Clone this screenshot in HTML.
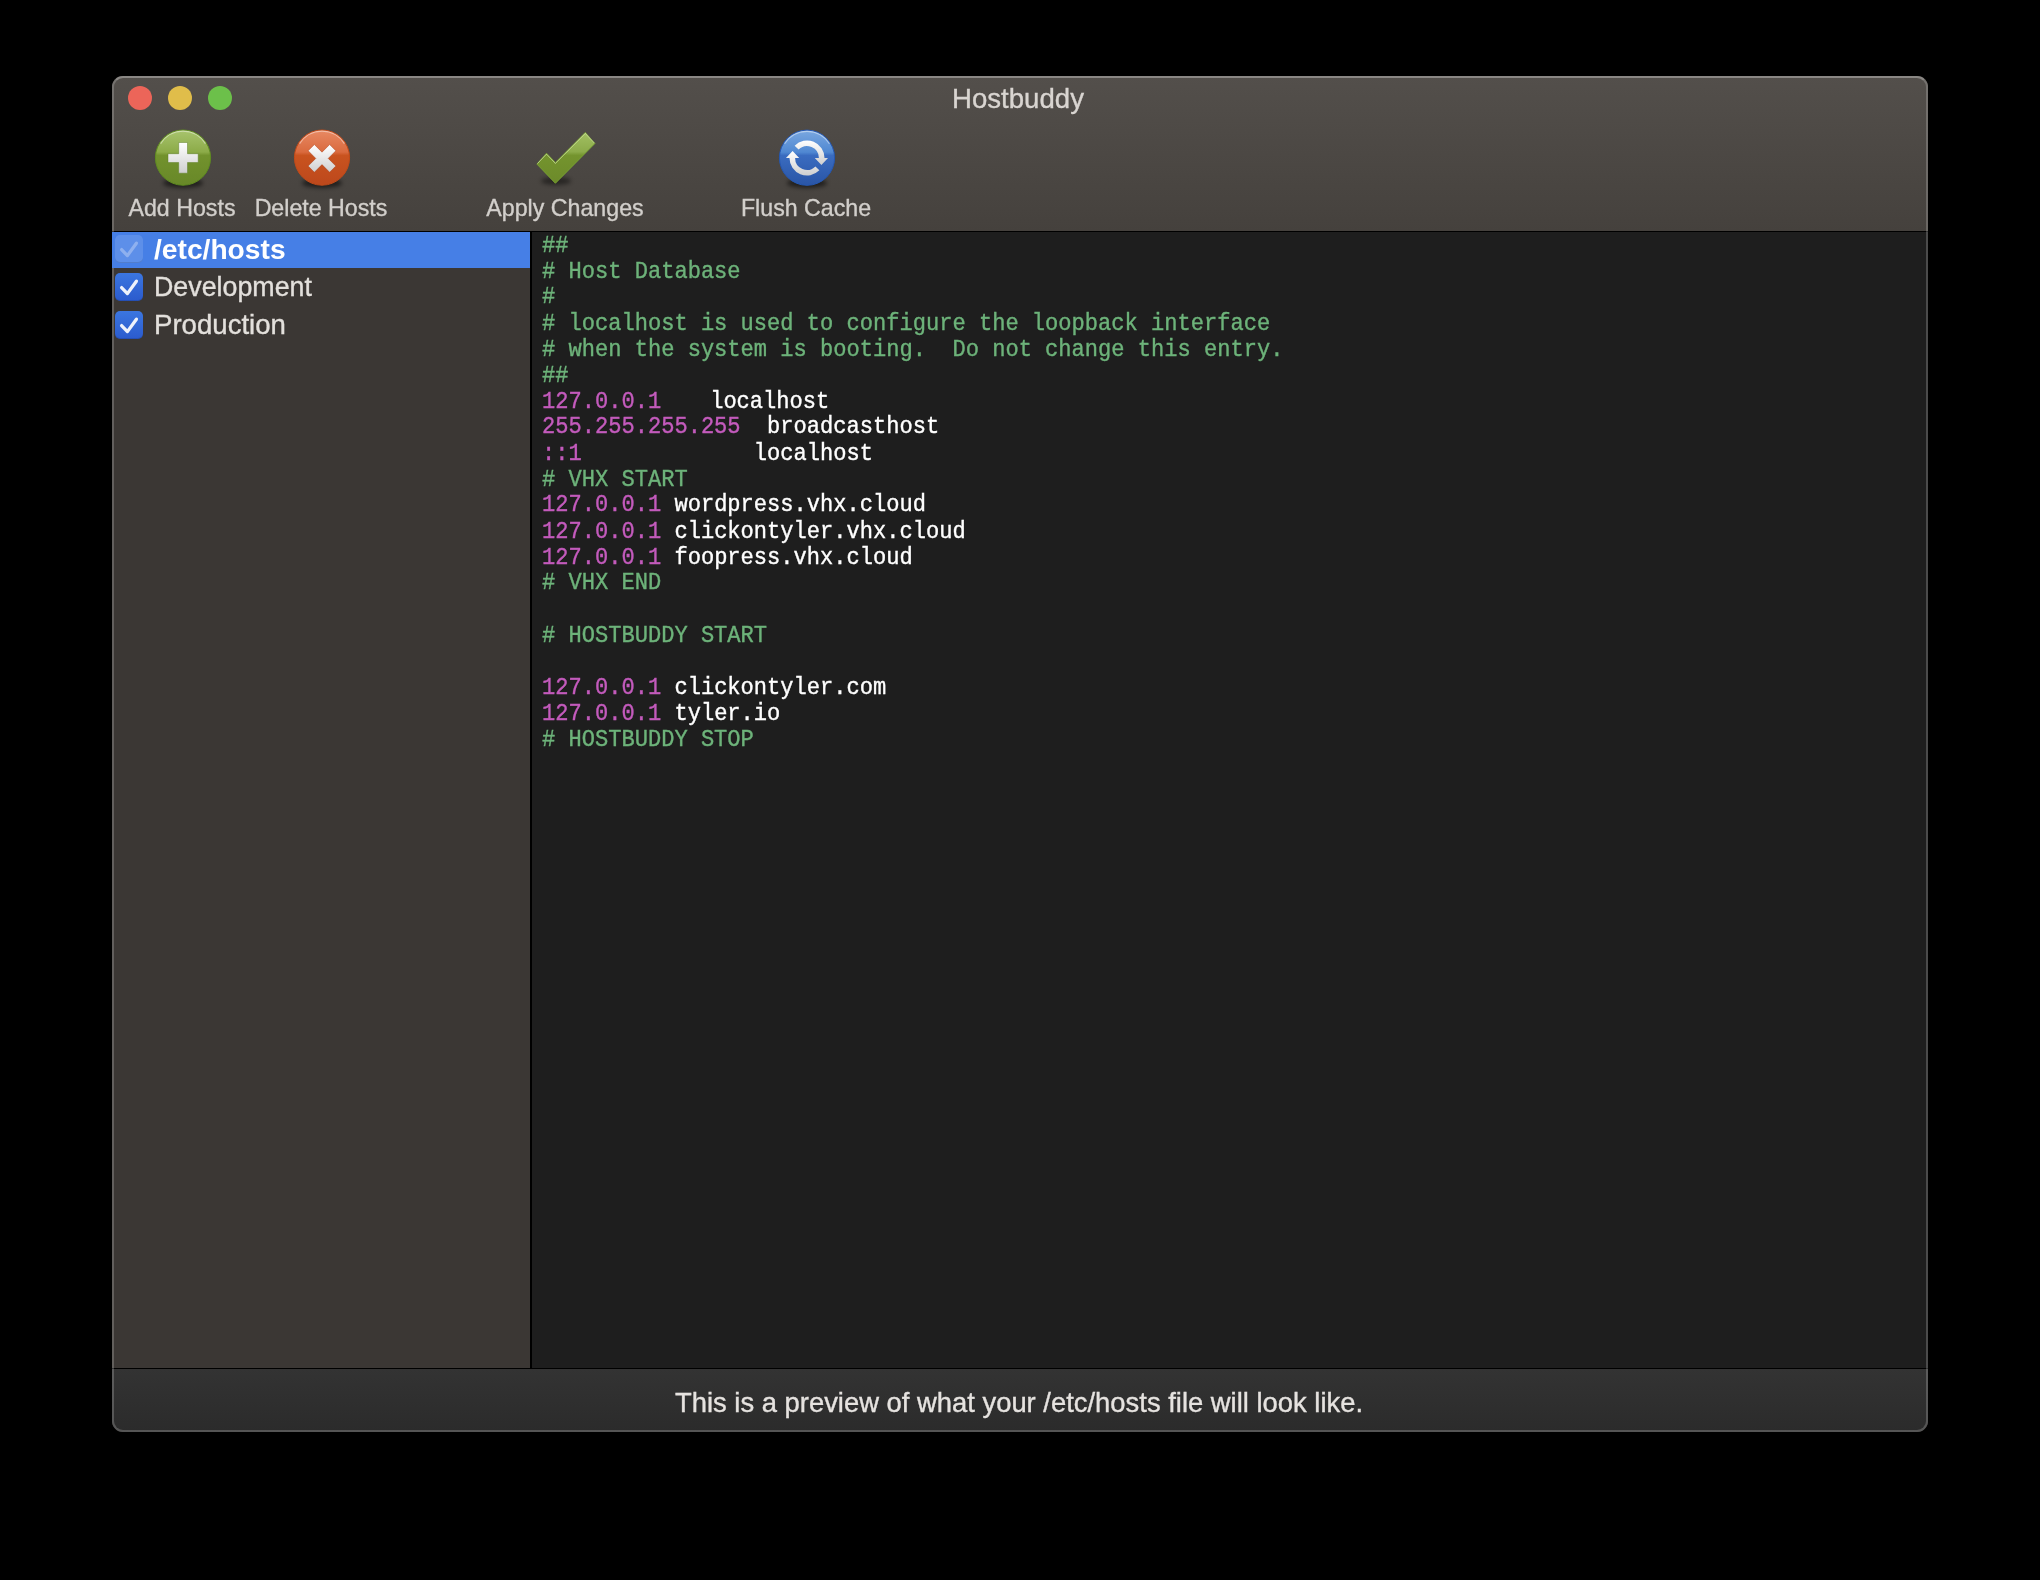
<!DOCTYPE html>
<html><head><meta charset="utf-8">
<style>
html,body{margin:0;padding:0;background:#000;width:2040px;height:1580px;overflow:hidden;}
body{position:relative;font-family:"Liberation Sans",sans-serif;}
.title,.lbl,.rtext,#stext{will-change:transform;-webkit-text-stroke:0.35px currentColor;}
.abs{position:absolute;}
#win{position:absolute;left:112px;top:76px;width:1816px;height:1356px;border-radius:11px;overflow:hidden;background:#3b3734;}
#toolbar{position:absolute;left:0;top:0;width:1816px;height:155px;background:linear-gradient(#534f4b,#45413d);}
#tbline{position:absolute;left:0;top:155px;width:1816px;height:1px;background:#000;}
#sidebar{position:absolute;left:0;top:156px;width:418px;height:1136px;background:#3b3734;}
#divider{position:absolute;left:418px;top:156px;width:2px;height:1136px;background:#000;}
#editor{position:absolute;left:420px;top:156px;width:1396px;height:1136px;background:#1e1e1e;}
#sbline{position:absolute;left:0;top:1292px;width:1816px;height:1px;background:#000;}
#status{position:absolute;left:0;top:1293px;width:1816px;height:63px;background:linear-gradient(#333,#2b2b2b);}
#frame{position:absolute;left:112px;top:76px;width:1816px;height:1356px;border-radius:11px;box-sizing:border-box;border:2px solid rgba(255,255,255,0.2);border-top-color:rgba(255,255,255,0.32);}
.light{position:absolute;width:24px;height:24px;border-radius:50%;top:86px;}
.title{position:absolute;left:-2px;width:2040px;text-align:center;top:82px;font-size:27.6px;color:#d9d5d1;line-height:34px;}
.lbl{position:absolute;font-size:23.2px;color:#d2cfcb;line-height:28px;white-space:nowrap;transform:translateX(-50%);top:194px;}
.row{position:absolute;left:112px;width:418px;height:36px;}
.cb{position:absolute;left:115px;width:28px;height:28px;border-radius:5px;background:linear-gradient(#3b76e0,#2b5bcd);box-shadow:inset 0 -1px 0 rgba(0,0,0,0.12);}
.rtext{position:absolute;left:154px;font-size:26.8px;color:#e3e0dc;line-height:34px;white-space:nowrap;}
pre{margin:0;position:absolute;left:542px;top:232.5px;font-family:"Liberation Mono",monospace;font-size:22.07px;line-height:23.636px;color:#ffffff;transform:scaleY(1.1);transform-origin:0 0;-webkit-text-stroke:0.35px currentColor;}
.c{color:#6db37a;}
.ip{color:#c45bbd;}
#stext{position:absolute;left:-1.5px;width:2040px;text-align:center;top:1386px;font-size:27.4px;color:#e6e3e0;line-height:34px;}
</style></head><body>
<div id="win">
  <div id="toolbar"></div>
  <div id="tbline"></div>
  <div id="sidebar"></div>
  <div id="divider"></div>
  <div id="editor"></div>
  <div id="sbline"></div>
  <div id="status"></div>
</div>
<div id="frame"></div>

<div class="light" style="left:128px;background:#ec6559;"></div>
<div class="light" style="left:168px;background:#e0bd4a;"></div>
<div class="light" style="left:208px;background:#6cc04a;"></div>
<div class="title">Hostbuddy</div>

<!-- toolbar icons -->
<svg class="abs" style="left:0;top:0;" width="1000" height="240" viewBox="0 0 1000 240">
<defs>
 <filter id="blur" x="-50%" y="-50%" width="200%" height="200%"><feGaussianBlur stdDeviation="2.2"/></filter>
 <linearGradient id="gG" x1="0" y1="0" x2="0" y2="1">
  <stop offset="0" stop-color="#a8c46e"/><stop offset="0.40" stop-color="#8cab48"/><stop offset="0.46" stop-color="#72922d"/><stop offset="1" stop-color="#688828"/>
 </linearGradient>
 <linearGradient id="gR" x1="0" y1="0" x2="0" y2="1">
  <stop offset="0" stop-color="#e88a64"/><stop offset="0.40" stop-color="#da6a3e"/><stop offset="0.46" stop-color="#c9531f"/><stop offset="1" stop-color="#bd481c"/>
 </linearGradient>
 <linearGradient id="gB" x1="0" y1="0" x2="0" y2="1">
  <stop offset="0" stop-color="#7aa8e0"/><stop offset="0.40" stop-color="#5088d2"/><stop offset="0.46" stop-color="#3a6cc0"/><stop offset="1" stop-color="#2a55a6"/>
 </linearGradient>
 <linearGradient id="gW" x1="0" y1="0" x2="0" y2="1">
  <stop offset="0" stop-color="#ffffff"/><stop offset="1" stop-color="#cfcfcf"/>
 </linearGradient>
 <linearGradient id="gC" x1="0" y1="0" x2="0" y2="1">
  <stop offset="0" stop-color="#a2c062"/><stop offset="0.38" stop-color="#8cab4a"/><stop offset="0.45" stop-color="#74942e"/><stop offset="1" stop-color="#6c8a2a"/>
 </linearGradient>
</defs>
<!-- shadows -->
<ellipse cx="183" cy="183" rx="20" ry="5" fill="#000" opacity="0.55" filter="url(#blur)"/>
<ellipse cx="322" cy="183" rx="20" ry="5" fill="#000" opacity="0.55" filter="url(#blur)"/>
<ellipse cx="807" cy="183" rx="20" ry="5" fill="#000" opacity="0.55" filter="url(#blur)"/>
<ellipse cx="556" cy="181" rx="15" ry="4" fill="#000" opacity="0.45" filter="url(#blur)"/>
<!-- green plus -->
<circle cx="183" cy="157.6" r="27.6" fill="url(#gG)" stroke="#5f8d1f" stroke-width="1"/>
<path d="M160.61,143.61 A26.4,26.4 0 0 1 205.39,143.61" fill="none" stroke="#fff" stroke-opacity="0.45" stroke-width="1.2"/>
<path d="M178.7,142.5 h8.8 v11.2 h10.7 v8.8 h-10.7 v10.7 h-8.8 v-10.7 h-10.7 v-8.8 h10.7 z" fill="url(#gW)" stroke="#5a7d22" stroke-opacity="0.6" stroke-width="0.8"/>
<!-- red x -->
<circle cx="322" cy="157.6" r="27.6" fill="url(#gR)" stroke="#c14a18" stroke-width="1"/>
<path d="M299.61,143.61 A26.4,26.4 0 0 1 344.39,143.61" fill="none" stroke="#fff" stroke-opacity="0.45" stroke-width="1.2"/>
<path d="M329.64,144.54 L335.86,150.76 L328.22,158.40 L335.86,166.04 L329.64,172.26 L322.00,164.62 L314.36,172.26 L308.14,166.04 L315.78,158.40 L308.14,150.76 L314.36,144.54 L322.00,152.18 Z" fill="url(#gW)" stroke="#a83c12" stroke-opacity="0.6" stroke-width="0.8"/>
<!-- check -->
<path d="M546.5,153.2 L555.4,162.5 L585.3,132.4 L594.9,143.5 L555.4,183.3 L536.9,164.1 Z" fill="url(#gC)" stroke="#7fb030" stroke-width="0.8"/>
<path d="M537.5,163.5 L546.5,154.2 L555.4,163.5 L585.3,133.4 L594.3,143" fill="none" stroke="#e6f0c8" stroke-opacity="0.55" stroke-width="1"/>
<!-- blue refresh -->
<circle cx="807" cy="157.7" r="27.6" fill="url(#gB)" stroke="#2458b4" stroke-width="1"/>
<path d="M784.61,143.71 A26.4,26.4 0 0 1 829.39,143.71" fill="none" stroke="#fff" stroke-opacity="0.45" stroke-width="1.2"/>
<path d="M794.63,145.63 A17.5,17.5 0 0 1 824.50,158.00 L828.00,158.00 L821.40,165.00 L814.80,158.00 L818.90,158.00 A11.9,11.9 0 0 0 798.59,149.59 Z" fill="url(#gW)"/>
<path d="M819.37,170.37 A17.5,17.5 0 0 1 789.50,158.00 L786.00,158.00 L792.60,151.00 L799.20,158.00 L795.10,158.00 A11.9,11.9 0 0 0 815.41,166.41 Z" fill="url(#gW)"/>
</svg>

<div class="lbl" style="left:182px;">Add Hosts</div>
<div class="lbl" style="left:321px;">Delete Hosts</div>
<div class="lbl" style="left:565px;">Apply Changes</div>
<div class="lbl" style="left:806px;">Flush Cache</div>

<!-- sidebar -->
<div class="row" style="top:232px;background:#467fe6;"></div>
<div class="cb" style="top:235px;background:rgba(255,255,255,0.13);"><svg width="28" height="28"><path d="M6.6,14.6 L12.4,20.6 L21.4,8.2" fill="none" stroke="#fff" stroke-opacity="0.3" stroke-width="3.3" stroke-linecap="round" stroke-linejoin="round"/></svg></div>
<div class="cb" style="top:273px;"><svg width="28" height="28"><path d="M6.6,14.6 L12.4,20.6 L21.4,8.2" fill="none" stroke="#eef2fb" stroke-width="3.3" stroke-linecap="round" stroke-linejoin="round"/></svg></div>
<div class="cb" style="top:311px;"><svg width="28" height="28"><path d="M6.6,14.6 L12.4,20.6 L21.4,8.2" fill="none" stroke="#eef2fb" stroke-width="3.3" stroke-linecap="round" stroke-linejoin="round"/></svg></div>
<div class="rtext" style="top:232px;font-weight:bold;color:#fff;font-size:28.2px;-webkit-text-stroke:0;">/etc/hosts</div>
<div class="rtext" style="top:270px;">Development</div>
<div class="rtext" style="top:308px;font-size:27.6px;">Production</div>

<pre><span class="c">##
# Host Database
#
# localhost is used to configure the loopback interface
# when the system is booting.  Do not change this entry.
##</span>
<span class="ip">127.0.0.1</span>    <span style="position:relative;left:-4px;">localhost</span>
<span class="ip">255.255.255.255</span>  broadcasthost
<span class="ip">::1</span>             localhost
<span class="c"># VHX START</span>
<span class="ip">127.0.0.1</span> wordpress.vhx.cloud
<span class="ip">127.0.0.1</span> clickontyler.vhx.cloud
<span class="ip">127.0.0.1</span> foopress.vhx.cloud
<span class="c"># VHX END</span>

<span class="c"># HOSTBUDDY START</span>

<span class="ip">127.0.0.1</span> clickontyler.com
<span class="ip">127.0.0.1</span> tyler.io
<span class="c"># HOSTBUDDY STOP</span></pre>

<div id="stext">This is a preview of what your /etc/hosts file will look like.</div>
</body></html>
